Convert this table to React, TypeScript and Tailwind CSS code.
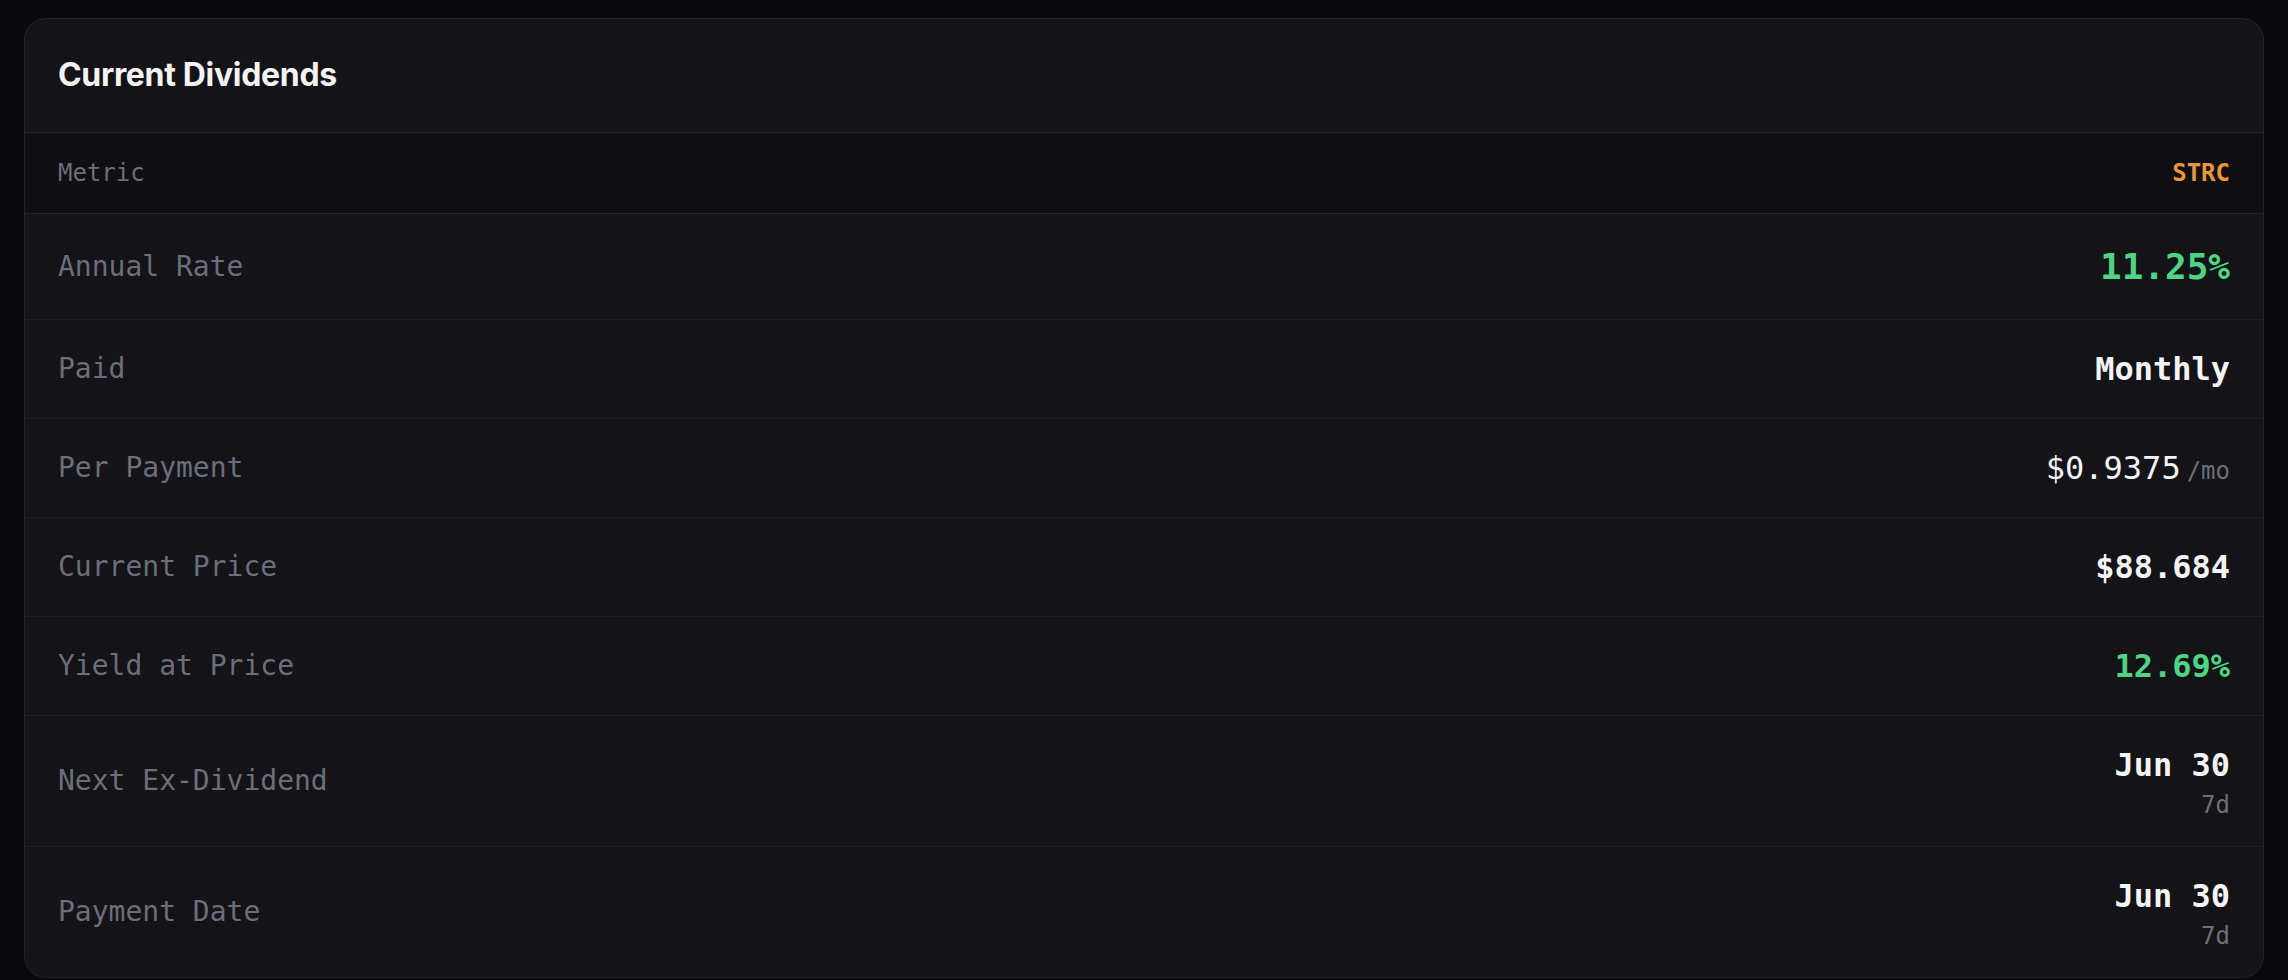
import React from 'react';

type Row = {
  label: string;
  value: string;
  tone?: 'green' | 'white';
  big?: boolean;
  weight?: 'bold' | 'normal';
  suffix?: string;
  sub?: string;
};

const rows: Row[] = [
  { label: 'Annual Rate', value: '11.25%', tone: 'green', big: true },
  { label: 'Paid', value: 'Monthly' },
  { label: 'Per Payment', value: '$0.9375', weight: 'normal', suffix: '/mo' },
  { label: 'Current Price', value: '$88.684' },
  { label: 'Yield at Price', value: '12.69%', tone: 'green' },
  { label: 'Next Ex-Dividend', value: 'Jun 30', sub: '7d' },
  { label: 'Payment Date', value: 'Jun 30', sub: '7d' },
];

function Value({ row }: { row: Row }) {
  const color = row.tone === 'green' ? 'text-[#4fd483]' : 'text-[#f4f4f5]';
  return (
    <div className="flex flex-col items-end">
      <div className="flex items-baseline gap-[6px]">
        <span
          className={`${color} ${
            row.big ? 'text-[36px] leading-[55px]' : 'text-[32px] leading-[48px]'
          } ${row.weight === 'normal' ? 'font-normal' : 'font-bold'}`}
        >
          {row.value}
        </span>
        {row.suffix && (
          <span className="text-[24px] leading-none text-[#6b6f7a]">
            {row.suffix}
          </span>
        )}
      </div>
      {row.sub && (
        <span className="text-[24px] leading-[32px] text-[#6b6f7a]">
          {row.sub}
        </span>
      )}
    </div>
  );
}

export default function App() {
  return (
    <div className="min-h-screen bg-[#0a0a0d] px-6 pt-[18px] pb-2">
      <div
        className="overflow-hidden rounded-[22px] border border-[#24242b] bg-[#131318]"
        style={{ fontFamily: '"DejaVu Sans Mono", monospace' }}
      >
        <div className="border-b border-[#24242b] px-[33px] pt-[34px] pb-[35px]">
          <h2
            className="text-[32px] leading-[44px] font-bold tracking-[-0.01em] text-[#f4f4f5]"
            style={{ fontFamily: 'Inter, "Noto Sans", sans-serif' }}
          >
            Current Dividends
          </h2>
        </div>

        <div className="flex items-center justify-between border-b border-[#24242b] bg-[#0f0f13] px-[33px] py-[22px] text-[24px] leading-[36px]">
          <span className="text-[#6b6f7a]">Metric</span>
          <span className="font-bold text-[#e8983a]">STRC</span>
        </div>

        {rows.map((row, i) => (
          <div
            key={row.label}
            className={`flex items-center justify-between px-[33px] py-[25px] ${
              i < rows.length - 1 ? 'border-b border-[#1e1e24]' : ''
            }`}
          >
            <span className="text-[28px] leading-[42px] text-[#6b6f7a]">
              {row.label}
            </span>
            <Value row={row} />
          </div>
        ))}
      </div>
    </div>
  );
}
